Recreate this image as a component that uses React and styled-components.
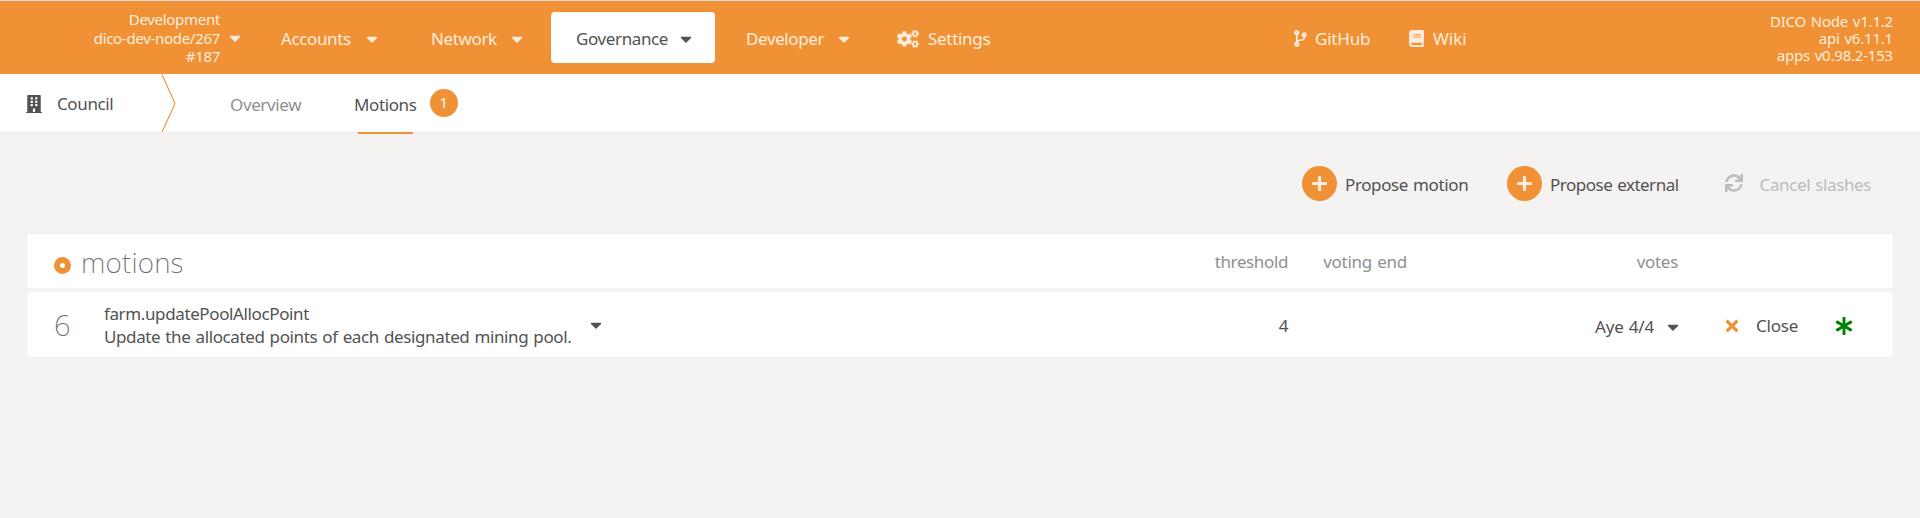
import React from 'react';
import styled, { createGlobalStyle } from 'styled-components';
import {
  FaCaretDown, FaCogs, FaCodeBranch, FaBook, FaBuilding, FaPlus, FaSync, FaTimes, FaAsterisk,
} from 'react-icons/fa';

const accent = '#f19135';

const GlobalStyle = createGlobalStyle`
  * { box-sizing: border-box; }
  body {
    margin: 0;
    background: #f4f3f1;
    color: #525252;
    font-family: 'Noto Sans', 'Open Sans', sans-serif;
    font-size: 17px;
    font-weight: 400;
    line-height: 24px;
    letter-spacing: -0.38px;
    word-spacing: 1px;
  }
  svg { display: block; flex: none; }
`;

const Page = styled.div`
  height: 518px;
  overflow: hidden;
`;

const TopBar = styled.header`
  display: flex;
  align-items: center;
  height: 74px;
  border-top: 1px solid #d9d9d9;
  background: ${accent};
  color: #feeddd;
`;

const NodeInfo = styled.div`
  width: 220px;
  padding-top: 1px;
  font-size: 15px;
  letter-spacing: -0.3px;
  line-height: 18.5px;
  text-align: right;
`;

const NodeCaret = styled.div`
  display: flex;
  width: 31px;
  padding-left: 6px;
`;

const MenuItem = styled.div`
  display: flex;
  align-items: center;
  justify-content: space-between;
  width: ${(p) => p.$width}px;
  height: 51px;
  margin-right: ${(p) => p.$after || 0}px;
  padding: 2px 20px 0 25px;
  border-radius: 4px;
  white-space: nowrap;
  background: ${(p) => (p.$active ? '#fff' : 'transparent')};
  color: ${(p) => (p.$active ? '#525252' : 'inherit')};
`;

const IconLink = styled.div`
  display: flex;
  align-items: center;
  gap: ${(p) => p.$gap}px;
  width: ${(p) => p.$width}px;
  padding-top: 2px;
  white-space: nowrap;
`;

const Versions = styled.div`
  margin-left: auto;
  padding: 1px 27px 0 0;
  font-size: 15px;
  letter-spacing: -0.2px;
  line-height: 17px;
  text-align: right;
`;

const Label = styled.span`
  white-space: nowrap;
  letter-spacing: ${(p) => p.$spacing ?? -0.38}px;
`;

const TabBar = styled.nav`
  display: flex;
  height: 59px;
  border-bottom: 1px solid #eeedeb;
  background: #fff;
`;

const Section = styled.div`
  display: flex;
  align-items: center;
  gap: 14px;
  width: 161px;
  padding: 1px 0 0 25px;
`;

const Tab = styled.div`
  position: relative;
  display: flex;
  align-items: center;
  width: ${(p) => p.$width}px;
  padding-top: 3px;
  color: ${(p) => (p.$active ? '#525252' : '#8f8f8f')};
`;

const Underline = styled.div`
  position: absolute;
  left: 4px;
  bottom: -2px;
  width: 55px;
  height: 2px;
  background: ${accent};
`;

const Count = styled.span`
  width: 28px;
  height: 28px;
  margin: -4px 0 0 13px;
  border-radius: 50%;
  background: ${accent};
  color: #fff;
  font-size: 15px;
  line-height: 27px;
  text-align: center;
`;

const Actions = styled.div`
  display: flex;
  align-items: center;
  justify-content: flex-end;
  height: 101px;
  margin-bottom: -1px;
  padding-right: 49px;
`;

const Action = styled.div`
  display: flex;
  align-items: center;
  width: ${(p) => p.$width}px;
  color: ${(p) => (p.$disabled ? '#bcbbb9' : 'inherit')};
  span { padding-top: 2px; }
`;

const PlusCircle = styled.div`
  display: flex;
  align-items: center;
  justify-content: center;
  width: 35px;
  height: 35px;
  margin-right: 8px;
  border-radius: 50%;
  background: ${accent};
  color: #feeddd;
`;

const RefreshIcon = styled.div`
  width: 35px;
  padding: 0 0 1px 0;
`;

const Table = styled.div`
  display: flex;
  flex-direction: column;
  gap: 4px;
  margin: 0 26px;
`;

const Row = styled.div`
  display: grid;
  grid-template-columns: 54px 1072px 135px 119px 271px 215px;
  align-items: center;
  height: ${(p) => p.$height}px;
  border: solid #efeeed;
  border-width: ${(p) => (p.$head ? '1px 1px 0' : '0 1px 1px')};
  border-radius: ${(p) => (p.$head ? '4px 4px 0 0' : '0 0 4px 4px')};
  background: #fff;
  color: ${(p) => (p.$head ? '#8f8f8f' : '#525252')};
`;

const Title = styled.div`
  grid-column: 1 / 3;
  display: flex;
  align-items: center;
  gap: 10px;
  padding: 2px 0 0 27px;
  color: #6e6e6e;
  font-size: 28px;
  font-weight: 250;
  line-height: 34px;
`;

const Ring = styled.span`
  width: 17px;
  height: 17px;
  margin-top: 6px;
  border: 6px solid ${accent};
  border-radius: 50%;
`;

const Index = styled.div`
  padding: 1px 0 0 27px;
  color: #6e6e6e;
  font-size: 29px;
  font-weight: 250;
  line-height: 34px;
`;

const Summary = styled.div`
  display: flex;
  align-items: center;
  padding: 1px 0 0 23px;
`;

const Call = styled.div`
  width: 483px;
  line-height: 23px;
  white-space: nowrap;
`;

const Cell = styled.div`
  display: flex;
  align-items: center;
  justify-content: flex-end;
  padding-top: ${(p) => p.$drop || 0}px;
`;

const VoteCount = styled(Cell)`
  gap: 10px;
  margin-right: -4px;
`;

const Controls = styled.div`
  display: flex;
  align-items: center;
  padding: 2px 0 0 45px;
`;

const CloseButton = styled.div`
  display: flex;
  align-items: center;
  gap: 15px;
  width: 112px;
`;

const Caret = () => <FaCaretDown size={18} />;

const Divider = () => (
  <svg width="15" height="58" viewBox="0 0 15 58" fill="none">
    <path d="M1 0.5L14 29.5L1 58" stroke={accent} strokeWidth="1.1" />
  </svg>
);

const Spacer = styled.div`
  width: ${(p) => p.$width}px;
`;

export default function App() {
  return (
    <Page>
      <GlobalStyle />
      <TopBar>
        <NodeInfo>
          <div>Development</div>
          <div>dico-dev-node/267</div>
          <div>#187</div>
        </NodeInfo>
        <NodeCaret><Caret /></NodeCaret>
        <Spacer $width={5} />
        <MenuItem $width={145} $after={5}><Label>Accounts</Label><Caret /></MenuItem>
        <MenuItem $width={140} $after={5}><Label>Network</Label><Caret /></MenuItem>
        <MenuItem $width={164} $after={6} $active><Label>Governance</Label><Caret /></MenuItem>
        <MenuItem $width={152}><Label>Developer</Label><Caret /></MenuItem>
        <Spacer $width={24} />
        <IconLink $width={395} $gap={9}><FaCogs size={22} /><Label $spacing={-0.3}>Settings</Label></IconLink>
        <IconLink $width={116} $gap={6}><FaCodeBranch size={17} /><Label $spacing={-0.2}>GitHub</Label></IconLink>
        <IconLink $width={70} $gap={8}><FaBook size={17} /><Label $spacing={0}>Wiki</Label></IconLink>
        <Versions>
          <div>DICO Node v1.1.2</div>
          <div>api v6.11.1</div>
          <div>apps v0.98.2-153</div>
        </Versions>
      </TopBar>
      <TabBar>
        <Section><FaBuilding size={18} /><Label>Council</Label></Section>
        <Divider />
        <Spacer $width={54} />
        <Tab $width={124}><Label>Overview</Label></Tab>
        <Tab $width={110} $active>
          <Label>Motions</Label>
          <Count>1</Count>
          <Underline />
        </Tab>
      </TabBar>
      <Actions>
        <Action $width={205}><PlusCircle><FaPlus size={17} /></PlusCircle><Label>Propose motion</Label></Action>
        <Action $width={218}><PlusCircle><FaPlus size={17} /></PlusCircle><Label $spacing={-0.5}>Propose external</Label></Action>
        <Action $width={146} $disabled><RefreshIcon><FaSync size={18} /></RefreshIcon><Label>Cancel slashes</Label></Action>
      </Actions>
      <Table>
        <Row $head $height={55}>
          <Title><Ring /><Label $spacing={0.2}>motions</Label></Title>
          <Cell $drop={2}><Label>threshold</Label></Cell>
          <Cell $drop={2}><Label $spacing={-0.25}>voting end</Label></Cell>
          <Cell $drop={2}><Label $spacing={-0.3}>votes</Label></Cell>
        </Row>
        <Row $height={66}>
          <Index>6</Index>
          <Summary>
            <Call>
              <div>farm.updatePoolAllocPoint</div>
              <div>Update the allocated points of each designated mining pool.</div>
            </Call>
            <Caret />
          </Summary>
          <Cell $drop={2}>4</Cell>
          <Cell />
          <VoteCount $drop={4}><Label $spacing={-0.2}>Aye 4/4</Label><Caret /></VoteCount>
          <Controls>
            <CloseButton><FaTimes size={18} color={accent} /><Label $spacing={-0.2}>Close</Label></CloseButton>
            <FaAsterisk size={18} color="#008000" />
          </Controls>
        </Row>
      </Table>
    </Page>
  );
}
